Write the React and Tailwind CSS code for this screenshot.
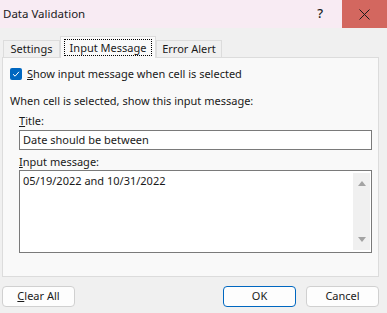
import React from "react";

const font = { fontFamily: '"Noto Sans", "Liberation Sans", sans-serif' };

function Tab({ label, active, width }) {
  if (active) {
    return (
      <div className={"relative z-10 -mb-px flex h-[22px] items-center justify-center border border-b-0 border-[#dcdcdc] bg-[#f9f9f9] " + width}>
        <span className="border border-dotted border-black px-[5px] leading-[15px]">{label}</span>
      </div>
    );
  }
  return (
    <div className={"flex h-[17px] items-center justify-center border border-b-0 border-[#dcdcdc] bg-[#f0f0f0] leading-[14px] " + width}>
      {label}
    </div>
  );
}

function Button({ children, primary, className = "" }) {
  return (
    <button
      className={
        "flex h-[21px] w-[73px] items-center justify-center rounded-[4px] border bg-[#fdfdfd] text-[11px] text-[#1a1a1a] " +
        (primary ? "border-[#0067c0]" : "border-[#d0d0d0]") +
        " " +
        className
      }
    >
      {children}
    </button>
  );
}

export default function App() {
  return (
    <div className="h-[313px] w-[387px] overflow-hidden bg-[#f0f0f0] text-[11px] text-[#1a1a1a]" style={font}>
      {/* title bar */}
      <div className="flex h-[28px] items-center bg-[#f8ebf3]">
        <span className="pl-[3px] text-[11.5px]">Data Validation</span>
        <span className="ml-auto mr-[19px] text-[13px] font-medium">?</span>
        <div className="flex h-full w-[45px] items-center justify-center bg-[#d3675f]">
          <svg width="11" height="11" viewBox="0 0 11 11">
            <path d="M0.5 0.5 L10.5 10.5 M10.5 0.5 L0.5 10.5" stroke="#1a1a1a" strokeWidth="1" />
          </svg>
        </div>
      </div>

      {/* tabs */}
      <div className="flex items-end pl-[3px] pt-[8px]">
        <Tab label="Settings" width="w-[57px]" />
        <Tab label="Input Message" width="w-[96px]" active />
        <Tab label="Error Alert" width="w-[66px]" />
      </div>

      {/* panel */}
      <div className="ml-[2px] h-[220px] w-[377px] border border-[#dcdcdc] bg-[#f9f9f9]">
        <div className="mt-[10px] flex h-[12px] items-center pl-[7px]">
          <div className="flex h-[12px] w-[12px] items-center justify-center rounded-[2px] bg-[#0067c0]">
            <svg width="8" height="8" viewBox="0 0 8 8">
              <path d="M1 4.2 L3.1 6.2 L7 1.8" fill="none" stroke="#ffffff" strokeWidth="1" />
            </svg>
          </div>
          <span className="ml-[5px] leading-[12px]">
            <u>S</u>how input message when cell is selected
          </span>
        </div>

        <div className="mt-[13px] pl-[7px] leading-[16px]">When cell is selected, show this input message:</div>

        <div className="mt-[4px] pl-[16px] leading-[16px]">
          <u>T</u>itle:
        </div>
        <div className="ml-[16px] mt-[1px] flex h-[20px] w-[353px] items-center border border-[#7a7a7a] bg-white pl-[3px]">
          Date should be between
        </div>

        <div className="mt-[4px] pl-[16px] leading-[16px]">
          <u>I</u>nput message:
        </div>
        <div className="ml-[16px] flex h-[83px] w-[353px] border border-[#7a7a7a] bg-white">
          <div className="flex-1 pl-[3px] pt-[2px] leading-[16px]">05/19/2022 and 10/31/2022</div>
          <div className="my-[2px] mr-[1px] flex w-[17px] flex-col items-center justify-between bg-[#f0f0f0] py-[8px]">
            <svg width="8" height="5" viewBox="0 0 8 5">
              <path d="M0 5 L4 0 L8 5 Z" fill="#a3a3a3" />
            </svg>
            <svg width="8" height="5" viewBox="0 0 8 5">
              <path d="M0 0 L4 5 L8 0 Z" fill="#a3a3a3" />
            </svg>
          </div>
        </div>
      </div>

      {/* buttons */}
      <div className="mt-[9px] flex pl-[2px]">
        <Button>
          <u>C</u>lear All
        </Button>
        <Button primary className="ml-auto">
          OK
        </Button>
        <Button className="ml-[10px] mr-[8px]">Cancel</Button>
      </div>
    </div>
  );
}
